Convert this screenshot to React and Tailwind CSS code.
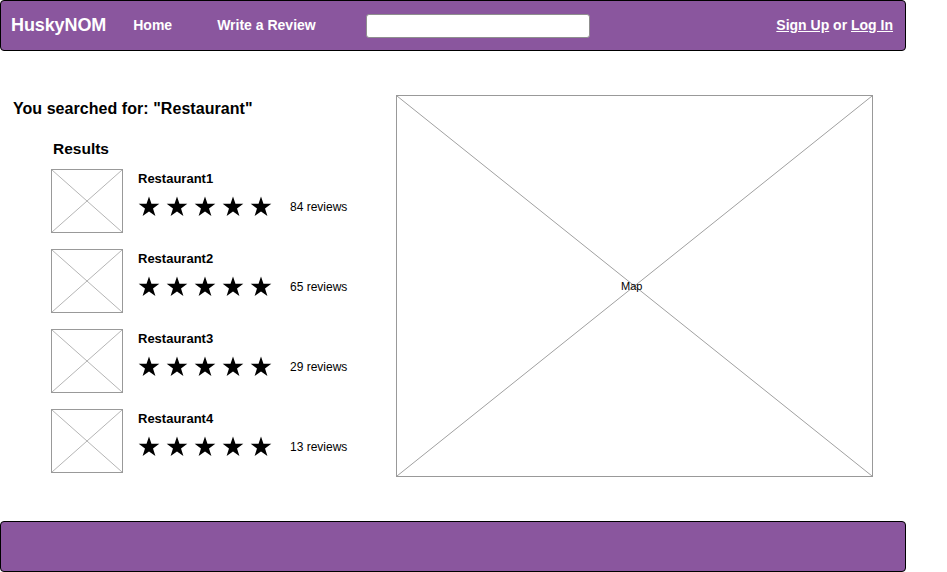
import React from 'react'

const results = [
  { name: 'Restaurant1', reviews: 84 },
  { name: 'Restaurant2', reviews: 65 },
  { name: 'Restaurant3', reviews: 29 },
  { name: 'Restaurant4', reviews: 13 },
]

const Star = () => (
  <svg width="22" height="21" viewBox="0 0 24 23">
    <polygon
      points="12,0.5 14.7,8.6 23.3,8.6 16.4,13.7 19,22 12,17 5,22 7.6,13.7 0.7,8.6 9.3,8.6"
      fill="#000"
    />
  </svg>
)

const Placeholder = ({ w, h, line = '#b5b5b5' }) => (
  <svg width={w} height={h} className="block" preserveAspectRatio="none" viewBox={`0 0 ${w} ${h}`}>
    <line x1="0" y1="0" x2={w} y2={h} stroke={line} strokeWidth="1" />
    <line x1={w} y1="0" x2="0" y2={h} stroke={line} strokeWidth="1" />
  </svg>
)

export default function App() {
  return (
    <div className="w-[947px] h-[572px] bg-white font-['Liberation_Sans',Arial,sans-serif] text-black overflow-hidden">
      {/* header */}
      <div className="w-[906px] h-[51px] bg-[#8a569e] border border-black rounded-[4px] flex items-center text-white font-bold">
        <span className="ml-[10px] text-[18px] tracking-[-0.1px]">HuskyNOM</span>
        <span className="ml-[27px] text-[14px]">Home</span>
        <span className="ml-[45px] text-[14px]">Write a Review</span>
        <input className="ml-[50px] w-[224px] h-[24px] bg-white border border-[#8f8f8f] rounded-[3px] outline-none" />
        <div className="ml-auto mr-[12px] text-[14px]">
          <span className="underline">Sign Up</span>
          <span> or </span>
          <span className="underline">Log In</span>
        </div>
      </div>

      {/* main */}
      <div className="flex pt-[44px]">
        <div className="w-[396px] pl-[13px] pt-[5px]">
          <h1 className="text-[16px] font-bold leading-[18px] tracking-[0.05px]">You searched for: "Restaurant"</h1>
          <div className="pl-[40px] pt-[22px]">
            <h2 className="text-[15.5px] font-bold leading-[18px]">Results</h2>
            <div className="mt-[11px] flex flex-col gap-[16px] -ml-[2px]">
              {results.map((r) => (
                <div key={r.name} className="flex">
                  <div className="w-[72px] h-[64px] border border-[#999]">
                    <Placeholder w={70} h={62} />
                  </div>
                  <div className="ml-[15px]">
                    <div className="text-[13px] font-bold leading-[15px] mt-[2px]">{r.name}</div>
                    <div className="flex items-center mt-[10px]">
                      <div className="flex gap-[6px]">
                        <Star /><Star /><Star /><Star /><Star />
                      </div>
                      <span className="ml-[18px] text-[12px]">{r.reviews} reviews</span>
                    </div>
                  </div>
                </div>
              ))}
            </div>
          </div>
        </div>

        <div className="relative w-[477px] h-[382px] border border-[#999]">
          <Placeholder w={475} h={380} line="#a0a0a0" />
          <span className="absolute left-[224px] top-[182px] text-[11px] text-black">Map</span>
        </div>
      </div>

      {/* footer */}
      <div className="mt-[44px] w-[906px] h-[51px] bg-[#8a569e] border border-black rounded-[4px]" />
    </div>
  )
}
